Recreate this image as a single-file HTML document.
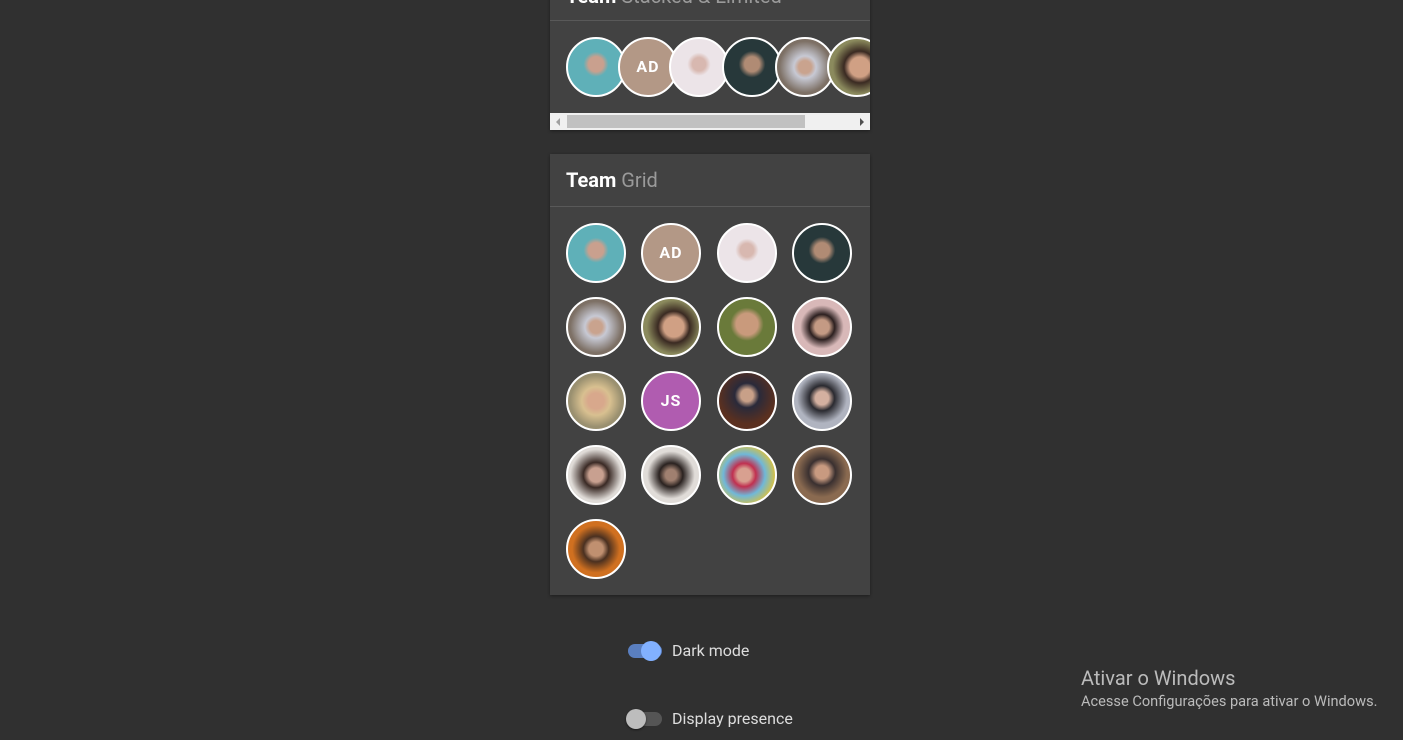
<!DOCTYPE html>
<html><head><style>
body{margin:0;width:1403px;height:740px;background:#303030;overflow:hidden;font-family:Roboto,"Liberation Sans",sans-serif;position:relative}
.card{position:absolute;left:550px;width:320px;background:#424242;box-shadow:0 1px 3px rgba(0,0,0,.4)}
.hd{position:absolute;left:16px;font-size:20px;font-weight:bold;color:#fff}
.hd span{color:#9a9a9a;font-weight:normal}
.line{position:absolute;left:0;width:320px;height:1px;background:#595959}
.av{position:absolute;width:56px;height:56px;border:2px solid #fff;border-radius:50%;box-sizing:content-box;color:#fff;font-weight:bold;font-size:16px;text-align:center;line-height:56px;letter-spacing:1px;overflow:hidden}
.tg{position:absolute;height:20px;color:#ddd;font-size:16px}
.ww{position:absolute;left:1081px;color:#bbb}
</style></head><body>
<div class="card" style="top:-10px;height:140px;overflow:hidden">
<div class="hd" style="top:-6px">Team <span>Stacked &amp; Limited</span></div>
<div class="line" style="top:30px"></div>
<div class="av" style="left:16px;top:47px;background:radial-gradient(circle at 50% 45%,#c9a08e 0 18%,#5fb0b8 30%);"></div>
<div class="av" style="left:68px;top:47px;background:#b39886">AD</div>
<div class="av" style="left:119px;top:47px;background:radial-gradient(circle at 50% 45%,#d8b8b0 0 16%,#ece4e8 28%)"></div>
<div class="av" style="left:172px;top:47px;background:radial-gradient(circle at 50% 45%,#b08b74 0 18%,#27383a 32%)"></div>
<div class="av" style="left:225px;top:47px;background:radial-gradient(circle at 50% 50%,#c9a38e 0 16%,#c7c9d4 28%,#7d7065 65%)"></div>
<div class="av" style="left:277px;top:47px;background:radial-gradient(circle at 55% 50%,#d0a084 0 24%,#3a2a22 38%,#8b8a5d 65%)"></div>
<div style="position:absolute;left:0;top:123px;width:320px;height:17px;background:#f0f0f0"></div>
<div style="position:absolute;left:17px;top:125px;width:238px;height:13px;background:#c1c1c1"></div>
<div style="position:absolute;left:6px;top:128px;width:0;height:0;border:4px solid transparent;border-right-color:#a0a0a0;border-left:0"></div>
<div style="position:absolute;left:310px;top:128px;width:0;height:0;border:4px solid transparent;border-left-color:#505050;border-right:0"></div>
</div>
<div class="card" style="top:154px;height:441px;">
<div class="hd" style="top:14px">Team <span>Grid</span></div>
<div class="line" style="top:52px"></div>
<div class="av" style="left:16px;top:69px;background:radial-gradient(circle at 50% 45%,#c9a08e 0 18%,#5fb0b8 30%)"></div>
<div class="av" style="left:91px;top:69px;background:#b39886">AD</div>
<div class="av" style="left:167px;top:69px;background:radial-gradient(circle at 50% 45%,#d8b8b0 0 16%,#ece4e8 28%)"></div>
<div class="av" style="left:242px;top:69px;background:radial-gradient(circle at 50% 45%,#b08b74 0 18%,#27383a 32%)"></div>
<div class="av" style="left:16px;top:143px;background:radial-gradient(circle at 50% 50%,#c9a38e 0 16%,#c7c9d4 28%,#7d7065 65%)"></div>
<div class="av" style="left:91px;top:143px;background:radial-gradient(circle at 55% 50%,#d0a084 0 24%,#3a2a22 38%,#8b8a5d 65%)"></div>
<div class="av" style="left:167px;top:143px;background:radial-gradient(circle at 50% 45%,#c99a7c 0 26%,#6a7a3a 40%)"></div>
<div class="av" style="left:242px;top:143px;background:radial-gradient(circle at 50% 50%,#c49a84 0 18%,#2c2020 32%,#d8b8b8 55%)"></div>
<div class="av" style="left:16px;top:217px;background:radial-gradient(circle at 50% 50%,#d8a88c 0 20%,#d8c090 36%,#9a9070 65%)"></div>
<div class="av" style="left:91px;top:217px;background:#b05cb0">JS</div>
<div class="av" style="left:167px;top:217px;background:radial-gradient(circle at 50% 40%,#c8a088 0 14%,#2a2a3a 28%,#5a3020 65%)"></div>
<div class="av" style="left:242px;top:217px;background:radial-gradient(circle at 50% 45%,#d4b0a0 0 16%,#2a2a30 30%,#b0b4c0 60%)"></div>
<div class="av" style="left:16px;top:291px;background:radial-gradient(circle at 50% 50%,#c8a090 0 18%,#3a2a25 32%,#e0dcd8 65%)"></div>
<div class="av" style="left:91px;top:291px;background:radial-gradient(circle at 50% 50%,#a08070 0 14%,#2a2220 30%,#e0dcd8 60%)"></div>
<div class="av" style="left:167px;top:291px;background:radial-gradient(circle at 45% 50%,#d8a090 0 16%,#c03050 28%,#70b8d8 50%,#d8c040 75%)"></div>
<div class="av" style="left:242px;top:291px;background:radial-gradient(circle at 50% 45%,#c89a80 0 16%,#3a3030 32%,#8a6a50 60%)"></div>
<div class="av" style="left:16px;top:365px;background:radial-gradient(circle at 50% 50%,#c09070 0 18%,#4a3020 32%,#d07020 60%)"></div>
</div>
<div style="position:absolute;left:628px;top:644px;width:34px;height:14px;border-radius:7px;background:#5a7fc0"></div>
<div style="position:absolute;left:641px;top:641px;width:20px;height:20px;border-radius:50%;background:#82b1ff"></div>
<div class="tg" style="left:672px;top:641px">Dark mode</div>
<div style="position:absolute;left:628px;top:712px;width:34px;height:14px;border-radius:7px;background:#555"></div>
<div style="position:absolute;left:626px;top:709px;width:20px;height:20px;border-radius:50%;background:#bdbdbd;box-shadow:0 1px 2px rgba(0,0,0,.5)"></div>
<div class="tg" style="left:672px;top:709px">Display presence</div>
<div class="ww" style="top:666px;font-size:20px">Ativar o Windows</div>
<div class="ww" style="top:692px;font-size:14.6px">Acesse Configurações para ativar o Windows.</div>
</body></html>
